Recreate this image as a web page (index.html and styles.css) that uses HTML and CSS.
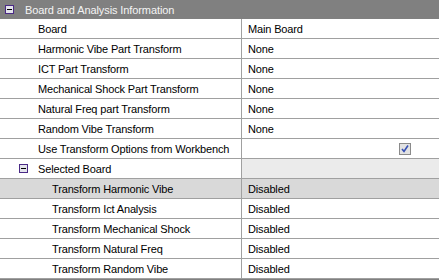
FILE: index.html
```html
<!DOCTYPE html>
<html lang="en">
<head>
    <meta charset="UTF-8">
    <title>Board and Analysis Information</title>
    <link rel="stylesheet" href="styles.css">
</head>
<body>
    <div class="grid">
        <div class="category">
            <span class="toggle"></span>
            <span>Board and Analysis Information</span>
        </div>

        <div class="row">
            <div class="name">Board</div>
            <div class="value">Main Board</div>
        </div>
        <div class="row">
            <div class="name">Harmonic Vibe Part Transform</div>
            <div class="value">None</div>
        </div>
        <div class="row">
            <div class="name">ICT Part Transform</div>
            <div class="value">None</div>
        </div>
        <div class="row">
            <div class="name">Mechanical Shock Part Transform</div>
            <div class="value">None</div>
        </div>
        <div class="row">
            <div class="name">Natural Freq part Transform</div>
            <div class="value">None</div>
        </div>
        <div class="row">
            <div class="name">Random Vibe Transform</div>
            <div class="value">None</div>
        </div>
        <div class="row">
            <div class="name">Use Transform Options from Workbench</div>
            <div class="value check-cell">
                <span class="checkbox">
                    <svg width="10" height="10" viewBox="0 0 10 10">
                        <path d="M2 5 L4 7.5 L8 1.5" fill="none" stroke="#3650b4" stroke-width="1.6"/>
                    </svg>
                </span>
            </div>
        </div>
        <div class="row group">
            <div class="name"><span class="toggle"></span>Selected Board</div>
            <div class="value"></div>
        </div>
        <div class="row child selected">
            <div class="name">Transform Harmonic Vibe</div>
            <div class="value">Disabled</div>
        </div>
        <div class="row child">
            <div class="name">Transform Ict Analysis</div>
            <div class="value">Disabled</div>
        </div>
        <div class="row child">
            <div class="name">Transform Mechanical Shock</div>
            <div class="value">Disabled</div>
        </div>
        <div class="row child">
            <div class="name">Transform Natural Freq</div>
            <div class="value">Disabled</div>
        </div>
        <div class="row child">
            <div class="name">Transform Random Vibe</div>
            <div class="value">Disabled</div>
        </div>
        <div class="bottom-bar"></div>
    </div>
</body>
</html>
```

FILE: styles.css
```css
body {
    margin: 0;
    font-family: "Liberation Sans", Arial, sans-serif;
    font-size: 11px;
    color: #000;
    background: #fff;
}

.grid {
    width: 439px;
    height: 280px;
    overflow: hidden;
}

.category {
    height: 19px;
    background-color: #808080;
    color: #f4f4f4;
    display: flex;
    align-items: center;
    gap: 11px;
    padding-left: 5px;
    letter-spacing: -0.1px;
}

.toggle {
    width: 7px;
    height: 7px;
    border: 1px solid #4a2a86;
    background: #e4e4ec;
    position: relative;
    flex: none;
}

.toggle::after {
    content: "";
    position: absolute;
    left: 1px;
    right: 1px;
    top: 3px;
    height: 1px;
    background: #000;
}

.row {
    display: grid;
    grid-template-columns: 242px 1fr;
    height: 19px;
    border-bottom: 1px solid #a0a0a0;
    letter-spacing: -0.15px;
}

.name {
    padding-left: 38px;
    border-right: 1px solid #a0a0a0;
    display: flex;
    align-items: center;
    white-space: nowrap;
    overflow: hidden;
}

.value {
    padding-left: 6px;
    display: flex;
    align-items: center;
}

.group .name {
    padding-left: 19px;
    gap: 10px;
}

.group .value {
    background: #ebebeb;
}

.child .name {
    padding-left: 52px;
}

.selected {
    background: #d9d9d9;
}

.check-cell {
    justify-content: flex-end;
    padding-right: 28px;
}

.checkbox {
    width: 10px;
    height: 10px;
    border: 1px solid #8a8a8a;
    background: #e2e2e2;
    display: flex;
}

.bottom-bar {
    height: 3px;
    background: #808080;
}
```
